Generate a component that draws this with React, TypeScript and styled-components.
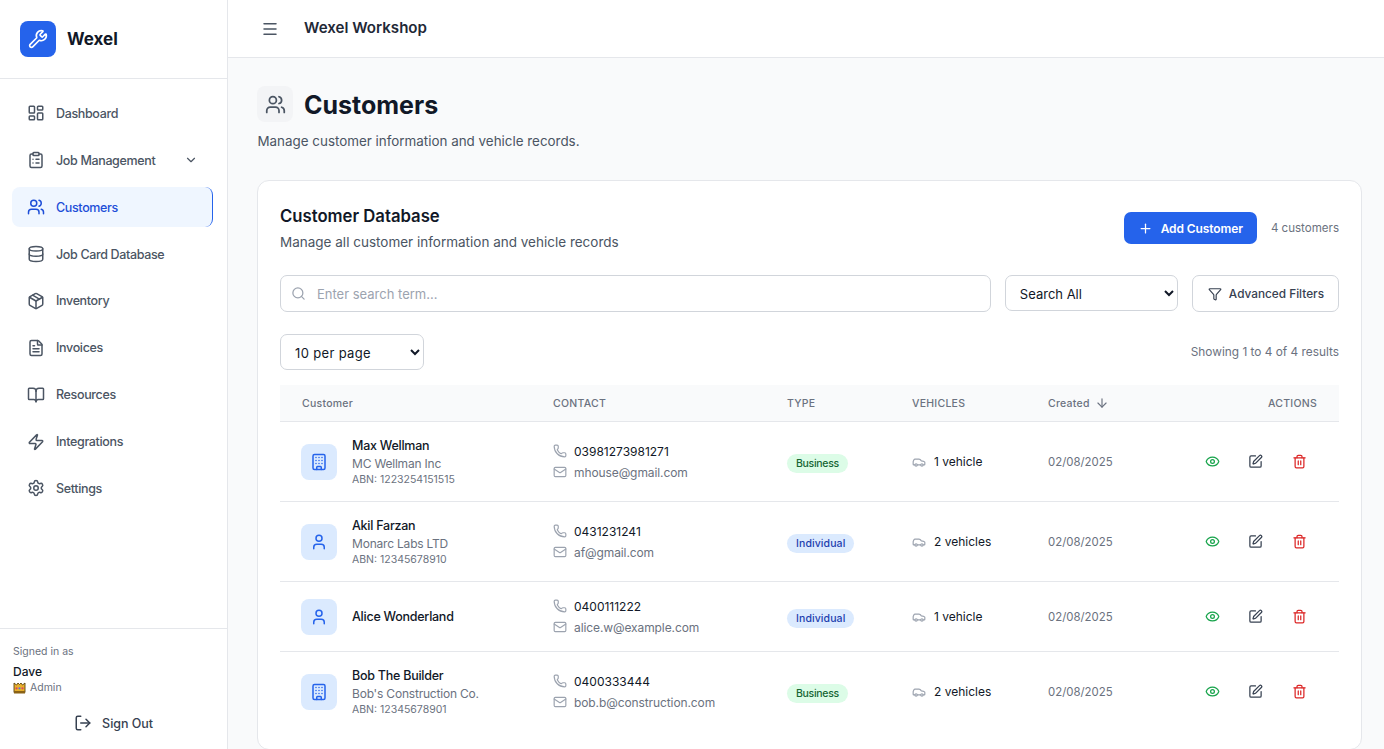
import React from 'react'
import styled, { createGlobalStyle } from 'styled-components'
import {
	ArrowDown,
	BookOpen,
	Building,
	Car,
	ChevronDown,
	ClipboardList,
	Database,
	Eye,
	FileText,
	Filter,
	LayoutDashboard,
	LogOut,
	Mail,
	Menu,
	Package,
	Phone,
	Plus,
	Search,
	Settings,
	SquarePen,
	Trash2,
	User,
	Users,
	Wrench,
	Zap,
} from 'lucide-react'

const GlobalStyle = createGlobalStyle`
	html, body, #root {
		margin: 0;
		height: 100%;
	}
	body {
		font-family: Inter, "Liberation Sans", sans-serif;
		background: #f9fafb;
		color: #111827;
		overflow: hidden;
	}
	* {
		box-sizing: border-box;
	}
`

const Shell = styled.div`
	display: flex;
	height: 749px;
	overflow: hidden;
`

const Sidebar = styled.aside`
	display: flex;
	flex-direction: column;
	flex: 0 0 228px;
	background: #fff;
	border-right: 1px solid #e5e7eb;
`

const Brand = styled.div`
	display: flex;
	align-items: center;
	gap: 11px;
	height: 79px;
	padding: 0 20px;
	border-bottom: 1px solid #e5e7eb;
`

const BrandMark = styled.div`
	display: flex;
	align-items: center;
	justify-content: center;
	width: 36px;
	height: 36px;
	border-radius: 8px;
	background: #2563eb;
	color: #fff;
`

const BrandName = styled.div`
	font-size: 17px;
	line-height: 36px;
	height: 36px;
	font-weight: 700;
	color: #111827;
`

const Nav = styled.nav`
	display: flex;
	flex-direction: column;
	gap: 6.875px;
	flex: 1;
	padding: 14.4px 14px 0 12px;
`

const NavItem = styled.div<{ $active?: boolean }>`
	display: flex;
	align-items: center;
	gap: 11px;
	height: 40px;
	padding: 0 15px;
	border-radius: 8px;
	font-size: 12.5px;
	letter-spacing: -0.35px;
	font-weight: 500;
	color: ${(p) => (p.$active ? '#1d4ed8' : '#4b5563')};
	background: ${(p) => (p.$active ? '#eff6ff' : 'transparent')};
	border-right: ${(p) => (p.$active ? '1.5px solid #2563eb' : '0')};
`

const NavLabel = styled.span`
	flex: 1;
`

const SidebarFooter = styled.div`
	padding: 16px 13px 0;
	height: 121px;
	border-top: 1px solid #e5e7eb;
`

const SignedIn = styled.div`
	font-size: 10.5px;
	line-height: 14px;
	color: #6b7280;
`

const UserName = styled.div`
	margin-top: 5px;
	font-size: 12px;
	line-height: 16px;
	font-weight: 500;
	color: #111827;
`

const UserRole = styled.div`
	display: flex;
	align-items: center;
	gap: 4px;
	font-size: 10.5px;
	line-height: 16px;
	color: #6b7280;
`

const SignOut = styled.div`
	display: flex;
	align-items: center;
	justify-content: center;
	gap: 10px;
	margin-top: 11px;
	height: 32px;
	font-size: 12.5px;
	letter-spacing: -0.05px;
	font-weight: 500;
	color: #374151;
`

const Content = styled.div`
	display: flex;
	flex-direction: column;
	flex: 1;
	min-width: 0;
`

const TopBar = styled.header`
	display: flex;
	align-items: center;
	gap: 25px;
	flex: 0 0 58px;
	padding: 0 33px;
	background: #fff;
	border-bottom: 1px solid #e5e7eb;
`

const MenuButton = styled.div`
	display: flex;
	color: #4b5563;
`

const WorkshopName = styled.div`
	font-size: 15.1px;
	line-height: 20px;
	margin-top: -1px;
	font-weight: 600;
	color: #1f2937;
`

const Main = styled.main`
	flex: 1;
	padding: 28px 22px 0 29px;
	background: #f9fafb;
`

const TitleRow = styled.div`
	display: flex;
	align-items: flex-start;
	gap: 11px;
`

const TitleIcon = styled.div`
	display: flex;
	align-items: center;
	justify-content: center;
	width: 36px;
	height: 36px;
	border-radius: 8px;
	background: #f3f4f6;
	color: #4b5563;
`

const PageTitle = styled.h1`
	margin: 0;
	height: 36px;
	font-size: 25px;
	line-height: 38px;
	font-weight: 700;
	color: #111827;
`

const PageSubtitle = styled.p`
	margin: 9px 0 0 0.5px;
	font-size: 13.4px;
	line-height: 20px;
	color: #4b5563;
`

const Card = styled.section`
	margin-top: 29px;
	padding: 23px 22px 0;
	height: 570px;
	background: #fff;
	border: 1px solid #e5e7eb;
	border-radius: 12px;
`

const CardHeader = styled.div`
	display: flex;
	align-items: flex-start;
	justify-content: space-between;
`

const CardTitle = styled.h2`
	margin: 0;
	font-size: 16.7px;
	line-height: 24px;
	font-weight: 600;
	color: #111827;
`

const CardSubtitle = styled.p`
	margin: 4px 0 0;
	font-size: 13.5px;
	line-height: 20px;
	color: #4b5563;
`

const HeaderActions = styled.div`
	display: flex;
	align-items: center;
	gap: 14px;
	margin-top: 8px;
`

const PrimaryButton = styled.button`
	display: flex;
	align-items: center;
	gap: 8px;
	height: 32px;
	padding: 0 14px;
	border: 0;
	border-radius: 7px;
	background: #2563eb;
	color: #fff;
	font-family: inherit;
	font-size: 12px;
	letter-spacing: -0.1px;
	font-weight: 600;
`

const Muted = styled.span`
	font-size: 11.55px;
	color: #6b7280;
`

const ResultsLabel = styled(Muted)`
	font-size: 11.85px;
`

const SearchRow = styled.div`
	display: flex;
	gap: 14px;
	margin-top: 23px;
`

const SearchBox = styled.label`
	display: flex;
	align-items: center;
	gap: 11px;
	flex: 1;
	height: 37px;
	padding: 0 10px;
	border: 1px solid #d1d5db;
	border-radius: 7px;
	color: #9ca3af;
`

const SearchInput = styled.input`
	flex: 1;
	border: 0;
	outline: 0;
	padding: 0;
	font-family: inherit;
	font-size: 13px;
	color: #111827;
	&::placeholder {
		color: #9ca3af;
	}
`

const Select = styled.select<{ $width: number }>`
	width: ${(p) => p.$width}px;
	height: 36px;
	padding: 1px 10px 0;
	border: 1px solid #d1d5db;
	border-radius: 7px;
	background: #fff;
	color: #111827;
	font-family: inherit;
	font-size: 13px;
`

const PerPageSelect = styled(Select)`
	letter-spacing: 0.35px;
`

const OutlineButton = styled.button`
	display: flex;
	align-items: center;
	gap: 7px;
	flex: 0 0 147px;
	height: 37px;
	padding: 0 14px 0 15px;
	border: 1px solid #d1d5db;
	border-radius: 7px;
	background: #fff;
	color: #374151;
	font-family: inherit;
	font-size: 11.8px;
	font-weight: 500;
	white-space: nowrap;
`

const PagerRow = styled.div`
	display: flex;
	align-items: center;
	justify-content: space-between;
	margin-top: 22px;
`

const Table = styled.table`
	width: 100%;
	margin-top: 15px;
	border-collapse: collapse;
	table-layout: fixed;
`

const HeadCell = styled.th<{ $right?: boolean }>`
	height: 36px;
	padding: 1px 22px 0;
	background: #f9fafb;
	border-bottom: 1px solid #e5e7eb;
	font-size: 10.5px;
	font-weight: 500;
	letter-spacing: 0.25px;
	color: #6b7280;
	text-align: ${(p) => (p.$right ? 'right' : 'left')};
`

const SortLabel = styled.span`
	display: inline-flex;
	align-items: center;
	gap: 5px;
`

const Row = styled.tr<{ $height: number }>`
	height: ${(p) => p.$height}px;
	border-bottom: 1px solid #e5e7eb;
	&:last-child {
		border-bottom: 0;
	}
`

const Cell = styled.td`
	padding: 1px 22px 0;
	vertical-align: middle;
`

const CustomerCell = styled.div`
	display: flex;
	align-items: center;
	gap: 15px;
	margin-left: -1px;
`

const Avatar = styled.div`
	display: flex;
	align-items: center;
	justify-content: center;
	flex: 0 0 36px;
	height: 36px;
	border-radius: 8px;
	background: #dbeafe;
	color: #2563eb;
`

const CustomerName = styled.div`
	font-size: 12.5px;
	letter-spacing: -0.25px;
	line-height: 18px;
	font-weight: 500;
	color: #111827;
`

const Company = styled.div`
	font-size: 12px;
	letter-spacing: -0.2px;
	line-height: 18px;
	color: #6b7280;
`

const Abn = styled.div`
	font-size: 10.5px;
	line-height: 14px;
	color: #6b7280;
`

const ContactLine = styled.div<{ $muted?: boolean }>`
	display: flex;
	align-items: center;
	gap: 7px;
	height: 21px;
	font-size: 12px;
	letter-spacing: ${(p) => (p.$muted ? '-0.1px' : '0')};
	color: ${(p) => (p.$muted ? '#6b7280' : '#111827')};
	svg {
		color: #9ca3af;
	}
`

const Badge = styled.span<{ $kind: string }>`
	display: inline-block;
	padding: 0 9px;
	border-radius: 10px;
	font-size: 10.5px;
	letter-spacing: ${(p) => (p.$kind === 'Business' ? '-0.3px' : '0.1px')};
	line-height: 19px;
	font-weight: 500;
	color: ${(p) => (p.$kind === 'Business' ? '#166534' : '#1e40af')};
	background: ${(p) => (p.$kind === 'Business' ? '#dcfce7' : '#dbeafe')};
`

const VehicleCount = styled.div`
	display: flex;
	align-items: center;
	gap: 8px;
	font-size: 12px;
	color: #111827;
	svg {
		color: #9ca3af;
	}
`

const CreatedDate = styled.div`
	font-size: 11.4px;
	color: #6b7280;
`

const Actions = styled.div`
	display: flex;
	justify-content: flex-end;
	gap: 28.5px;
	padding-right: 10.5px;
`

const ActionIcon = styled.span<{ $color: string }>`
	display: flex;
	color: ${(p) => p.$color};
`

type Customer = {
	name: string
	company?: string
	abn?: string
	phone: string
	email: string
	type: 'Business' | 'Individual'
	vehicles: string
	height: number
}

const customers: Customer[] = [
	{ name: 'Max Wellman', company: 'MC Wellman Inc', abn: 'ABN: 1223254151515', phone: '03981273981271', email: 'mhouse@gmail.com', type: 'Business', vehicles: '1 vehicle', height: 80 },
	{ name: 'Akil Farzan', company: 'Monarc Labs LTD', abn: 'ABN: 12345678910', phone: '0431231241', email: 'af@gmail.com', type: 'Individual', vehicles: '2 vehicles', height: 80 },
	{ name: 'Alice Wonderland', phone: '0400111222', email: 'alice.w@example.com', type: 'Individual', vehicles: '1 vehicle', height: 70 },
	{ name: 'Bob The Builder', company: "Bob's Construction Co.", abn: 'ABN: 12345678901', phone: '0400333444', email: 'bob.b@construction.com', type: 'Business', vehicles: '2 vehicles', height: 80 },
]

const navItems = [
	{ label: 'Dashboard', icon: LayoutDashboard },
	{ label: 'Job Management', icon: ClipboardList, caret: true },
	{ label: 'Customers', icon: Users, active: true },
	{ label: 'Job Card Database', icon: Database },
	{ label: 'Inventory', icon: Package },
	{ label: 'Invoices', icon: FileText },
	{ label: 'Resources', icon: BookOpen },
	{ label: 'Integrations', icon: Zap },
	{ label: 'Settings', icon: Settings },
]

function CrownIcon() {
	return (
		<svg width="13" height="12" viewBox="0 0 13 12" aria-hidden="true">
			<path d="M1 1 3.5 3 5 1 6.5 2.5 8 1 9.5 3 12 1V10.5H1Z" fill="#e8b02c" stroke="#5c4310" strokeWidth="0.9" />
			<rect x="1" y="9" width="11" height="2.5" fill="#8a6216" />
			<circle cx="3.5" cy="6.3" r="1.1" fill="#e0445c" />
			<circle cx="6.5" cy="6.3" r="1.1" fill="#5a7ad8" />
			<circle cx="9.5" cy="6.3" r="1.1" fill="#e0445c" />
		</svg>
	)
}

export default function App() {
	return (
		<Shell>
			<GlobalStyle />
			<Sidebar>
				<Brand>
					<BrandMark>
						<Wrench size={20} />
					</BrandMark>
					<BrandName>Wexel</BrandName>
				</Brand>
				<Nav>
					{navItems.map((item) => (
						<NavItem key={item.label} $active={item.active}>
							<item.icon size={18} />
							<NavLabel>{item.label}</NavLabel>
							{item.caret && <ChevronDown size={14} />}
						</NavItem>
					))}
				</Nav>
				<SidebarFooter>
					<SignedIn>Signed in as</SignedIn>
					<UserName>Dave</UserName>
					<UserRole>
						<CrownIcon />
						Admin
					</UserRole>
					<SignOut>
						<LogOut size={18} />
						Sign Out
					</SignOut>
				</SidebarFooter>
			</Sidebar>
			<Content>
				<TopBar>
					<MenuButton>
						<Menu size={18} />
					</MenuButton>
					<WorkshopName>Wexel Workshop</WorkshopName>
				</TopBar>
				<Main>
					<TitleRow>
						<TitleIcon>
							<Users size={21} />
						</TitleIcon>
						<PageTitle>Customers</PageTitle>
					</TitleRow>
					<PageSubtitle>Manage customer information and vehicle records.</PageSubtitle>
					<Card>
						<CardHeader>
							<div>
								<CardTitle>Customer Database</CardTitle>
								<CardSubtitle>Manage all customer information and vehicle records</CardSubtitle>
							</div>
							<HeaderActions>
								<PrimaryButton>
									<Plus size={15} />
									Add Customer
								</PrimaryButton>
								<Muted>4 customers</Muted>
							</HeaderActions>
						</CardHeader>
						<SearchRow>
							<SearchBox>
								<Search size={15} />
								<SearchInput placeholder="Enter search term..." />
							</SearchBox>
							<Select $width={173} defaultValue="all">
								<option value="all">Search All</option>
							</Select>
							<OutlineButton>
								<Filter size={14} />
								Advanced Filters
							</OutlineButton>
						</SearchRow>
						<PagerRow>
							<PerPageSelect $width={144} defaultValue="10">
								<option value="10">10 per page</option>
							</PerPageSelect>
							<ResultsLabel>Showing 1 to 4 of 4 results</ResultsLabel>
						</PagerRow>
						<Table>
							<colgroup>
								<col style={{ width: 251 }} />
								<col style={{ width: 234 }} />
								<col style={{ width: 125 }} />
								<col style={{ width: 136 }} />
								<col style={{ width: 135 }} />
								<col />
							</colgroup>
							<thead>
								<tr>
									<HeadCell>Customer</HeadCell>
									<HeadCell>CONTACT</HeadCell>
									<HeadCell>TYPE</HeadCell>
									<HeadCell>VEHICLES</HeadCell>
									<HeadCell>
										<SortLabel>
											Created
											<ArrowDown size={14} />
										</SortLabel>
									</HeadCell>
									<HeadCell $right>ACTIONS</HeadCell>
								</tr>
							</thead>
							<tbody>
								{customers.map((c) => (
									<Row key={c.name} $height={c.height}>
										<Cell>
											<CustomerCell>
												<Avatar>
													{c.type === 'Business' ? <Building size={18} /> : <User size={18} />}
												</Avatar>
												<div>
													<CustomerName>{c.name}</CustomerName>
													{c.company && <Company>{c.company}</Company>}
													{c.abn && <Abn>{c.abn}</Abn>}
												</div>
											</CustomerCell>
										</Cell>
										<Cell>
											<ContactLine>
												<Phone size={14} />
												{c.phone}
											</ContactLine>
											<ContactLine $muted>
												<Mail size={14} />
												{c.email}
											</ContactLine>
										</Cell>
										<Cell>
											<Badge $kind={c.type}>{c.type}</Badge>
										</Cell>
										<Cell>
											<VehicleCount>
												<Car size={14} />
												{c.vehicles}
											</VehicleCount>
										</Cell>
										<Cell>
											<CreatedDate>02/08/2025</CreatedDate>
										</Cell>
										<Cell>
											<Actions>
												<ActionIcon $color="#16a34a">
													<Eye size={15} />
												</ActionIcon>
												<ActionIcon $color="#374151">
													<SquarePen size={15} />
												</ActionIcon>
												<ActionIcon $color="#dc2626">
													<Trash2 size={15} />
												</ActionIcon>
											</Actions>
										</Cell>
									</Row>
								))}
							</tbody>
						</Table>
					</Card>
				</Main>
			</Content>
		</Shell>
	)
}
